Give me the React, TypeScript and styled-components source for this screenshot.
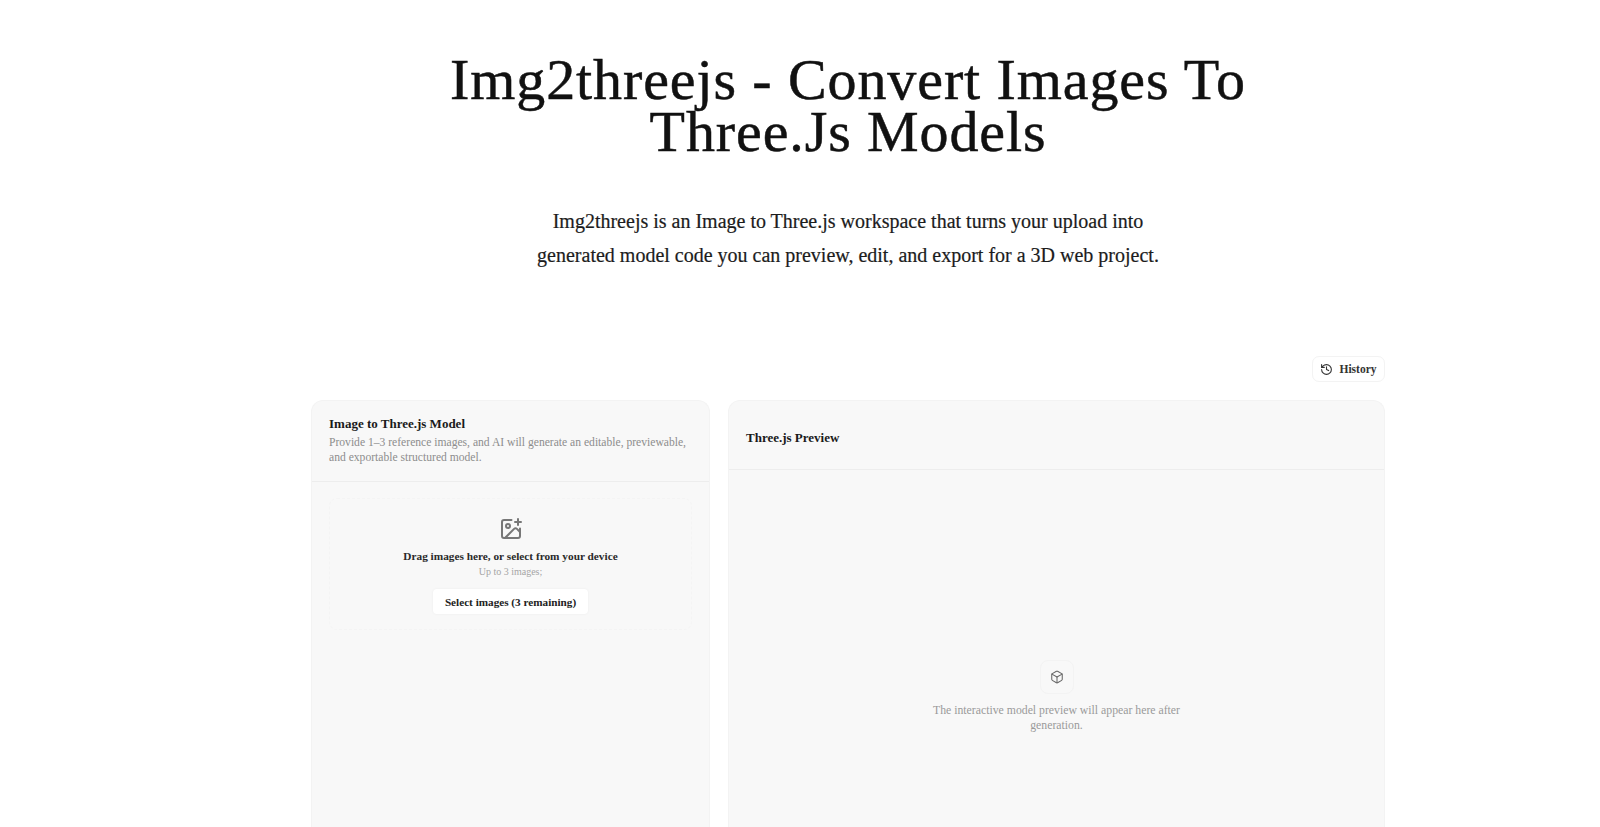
import { Box, History, ImagePlus } from "lucide-react";
import styled, { createGlobalStyle } from "styled-components";

const GlobalStyle = createGlobalStyle`
  html, body {
    margin: 0;
    height: 100%;
    overflow: hidden;
    background: #fff;
  }

  body {
    font-family: "Liberation Serif", "Times New Roman", serif;
    color: #141414;
  }

  * {
    box-sizing: border-box;
  }
`;

export default function App() {
  return (
    <>
      <GlobalStyle />
      <Page>
        <Hero>
          <Title>
            Img2threejs - Convert Images To
            <br />
            Three.Js Models
          </Title>
          <Lead>
            Img2threejs is an Image to Three.js workspace that turns your upload into
            <br />
            generated model code you can preview, edit, and export for a 3D web project.
          </Lead>
        </Hero>

        <Toolbar>
          <HistoryButton>
            <History size={13} strokeWidth={2} />
            History
          </HistoryButton>
        </Toolbar>

        <Panels>
          <Panel>
            <FormHeader>
              <PanelTitle>Image to Three.js Model</PanelTitle>
              <PanelHint>
                Provide 1–3 reference images, and AI will generate an editable, previewable,
                and exportable structured model.
              </PanelHint>
            </FormHeader>
            <FormBody>
              <DropZone>
                <ImagePlus size={24} strokeWidth={2} color="#777" />
                <DropTitle>Drag images here, or select from your device</DropTitle>
                <DropHint>Up to 3 images;</DropHint>
                <SelectButton>Select images (3 remaining)</SelectButton>
              </DropZone>
            </FormBody>
          </Panel>

          <Panel>
            <PreviewHeader>
              <PanelTitle>Three.js Preview</PanelTitle>
            </PreviewHeader>
            <PreviewBody>
              <IconTile>
                <Box size={14} strokeWidth={1.8} color="#666" />
              </IconTile>
              <PreviewText>
                The interactive model preview will appear here after generation.
              </PreviewText>
            </PreviewBody>
          </Panel>
        </Panels>
      </Page>
    </>
  );
}

const Page = styled.main`
  width: 1600px;
  height: 827px;
  overflow: hidden;
  padding-left: 96px;
  display: flex;
  flex-direction: column;
  align-items: center;
`;

const Hero = styled.header`
  width: 1074px;
  padding-top: 54px;
  text-align: center;
`;

const Title = styled.h1`
  margin: 0;
  font-size: 58px;
  line-height: 52px;
  letter-spacing: 0.9px;
  font-weight: 400;
  color: #111;
  -webkit-text-stroke: 0.5px #111;
`;

const Lead = styled.p`
  margin: 46px 0 0;
  font-size: 20px;
  line-height: 34px;
  color: #1c1c1c;
  -webkit-text-stroke: 0.2px #1c1c1c;
`;

const Toolbar = styled.div`
  width: 1074px;
  margin-top: 84px;
  display: flex;
  justify-content: flex-end;
`;

const HistoryButton = styled.button`
  width: 73px;
  height: 26px;
  padding: 0;
  display: flex;
  align-items: center;
  justify-content: center;
  gap: 6px;
  border: 1px solid #f3f3f3;
  border-radius: 7px;
  background: #fff;
  font: 700 11.5px "Liberation Serif", serif;
  color: #333;
`;

const Panels = styled.div`
  width: 1074px;
  margin-top: 18px;
  flex: 1;
  display: grid;
  grid-template-columns: 399px 657px;
  gap: 18px;
`;

const Panel = styled.section`
  min-height: 440px;
  display: flex;
  flex-direction: column;
  background: #f8f8f8;
  border: 1px solid #f3f3f3;
  border-bottom: 0;
  border-radius: 12px 12px 0 0;
`;

const FormHeader = styled.div`
  height: 81px;
  padding: 15px 17px 0;
  border-bottom: 1px solid #ededed;
`;

const PreviewHeader = styled.div`
  height: 69px;
  padding: 6px 17px 0;
  display: flex;
  align-items: center;
  border-bottom: 1px solid #ededed;
`;

const PanelTitle = styled.h2`
  margin: 0;
  font-size: 13px;
  line-height: 16px;
  font-weight: 700;
  color: #1a1a1a;
`;

const PanelHint = styled.p`
  margin: 4px 0 0;
  font-size: 11.6px;
  line-height: 14.5px;
  color: #8d8d8d;
`;

const FormBody = styled.div`
  padding: 16px 17px;
`;

const DropZone = styled.div`
  height: 132px;
  padding-top: 18px;
  display: flex;
  flex-direction: column;
  align-items: center;
  border: 1px dashed #f4f4f4;
  border-radius: 8px;
`;

const DropTitle = styled.p`
  margin: 8px 0 0;
  font-size: 11.3px;
  line-height: 15px;
  font-weight: 700;
  color: #2a2a2a;
`;

const DropHint = styled.p`
  margin: 1px 0 0;
  font-size: 10px;
  line-height: 14px;
  color: #a5a5a5;
`;

const SelectButton = styled.button`
  width: 155px;
  height: 25px;
  margin-top: 10px;
  padding: 0;
  border: 0;
  border-radius: 4px;
  background: #fff;
  box-shadow: 0 0 3px rgba(0, 0, 0, 0.05);
  font: 700 11.2px "Liberation Serif", serif;
  color: #222;
`;

const PreviewBody = styled.div`
  flex: 1;
  padding-top: 190px;
  display: flex;
  flex-direction: column;
  align-items: center;
`;

const IconTile = styled.div`
  width: 34px;
  height: 34px;
  display: flex;
  align-items: center;
  justify-content: center;
  border: 1px solid #f3f3f3;
  border-radius: 8px;
`;

const PreviewText = styled.p`
  width: 260px;
  margin: 10px 0 0;
  font-size: 11.75px;
  line-height: 14.5px;
  text-align: center;
  color: #9a9a9a;
`;
